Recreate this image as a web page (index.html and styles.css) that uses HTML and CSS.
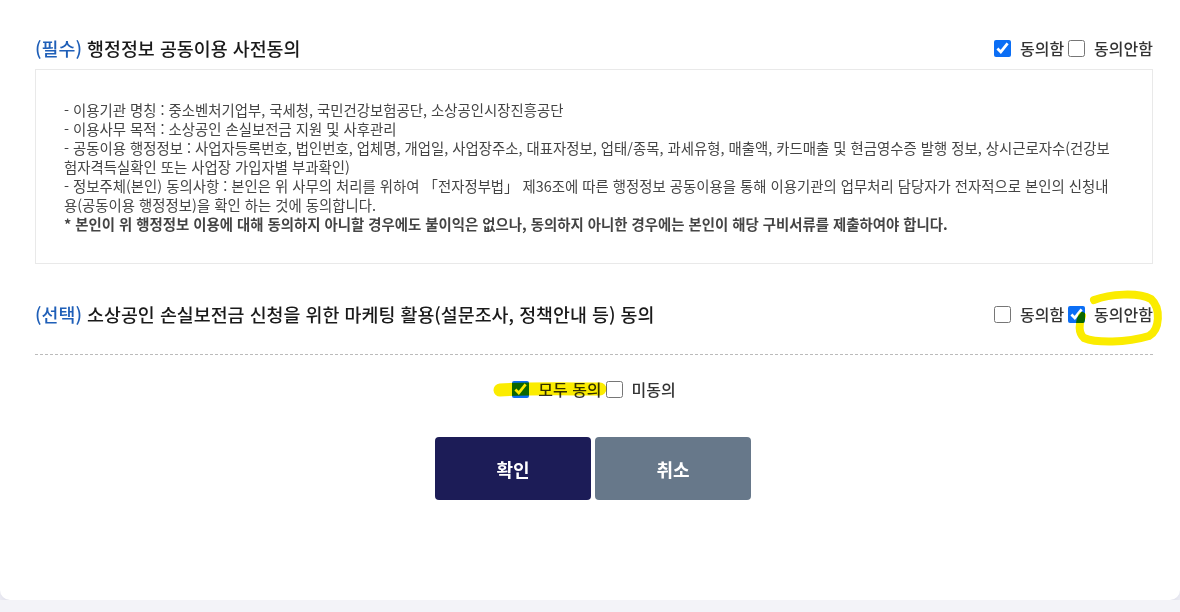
FILE: index.html
```html
<!DOCTYPE html>
<html lang="ko">
<head>
  <meta charset="UTF-8">
  <meta name="viewport" content="width=device-width, initial-scale=1.0">
  <title>행정정보 공동이용 동의</title>
  <link rel="stylesheet" href="styles.css">
</head>
<body>
  <div class="card">
    <div class="agree-head">
      <h3 class="agree-title"><span class="tag">(필수)</span> 행정정보 공동이용 사전동의</h3>
      <div class="choices">
        <label class="choice"><input type="checkbox" checked> 동의함</label>
        <label class="choice"><input type="checkbox"> 동의안함</label>
      </div>
    </div>

    <div class="terms">
      <p>- 이용기관 명칭 : 중소벤처기업부, 국세청, 국민건강보험공단, 소상공인시장진흥공단</p>
      <p>- 이용사무 목적 : 소상공인 손실보전금 지원 및 사후관리</p>
      <p>- 공동이용 행정정보 : 사업자등록번호, 법인번호, 업체명, 개업일, 사업장주소, 대표자정보, 업태/종목, 과세유형, 매출액, 카드매출 및 현금영수증 발행 정보, 상시근로자수(건강보<br>험자격득실확인 또는 사업장 가입자별 부과확인)</p>
      <p>- 정보주체(본인) 동의사항 : 본인은 위 사무의 처리를 위하여 「전자정부법」 제36조에 따른 행정정보 공동이용을 통해 이용기관의 업무처리 담당자가 전자적으로 본인의 신청내<br>용(공동이용 행정정보)을 확인 하는 것에 동의합니다.</p>
      <p class="strong">* 본인이 위 행정정보 이용에 대해 동의하지 아니할 경우에도 불이익은 없으나, 동의하지 아니한 경우에는 본인이 해당 구비서류를 제출하여야 합니다.</p>
    </div>

    <div class="agree-head second">
      <h3 class="agree-title"><span class="tag">(선택)</span> 소상공인 손실보전금 신청을 위한 마케팅 활용(설문조사, 정책안내 등) 동의</h3>
      <div class="choices">
        <label class="choice"><input type="checkbox"> 동의함</label>
        <label class="choice"><input type="checkbox" checked> 동의안함</label>
      </div>
    </div>

    <div class="all-agree">
      <label class="choice"><input type="checkbox" checked> 모두 동의</label>
      <label class="choice"><input type="checkbox"> 미동의</label>
    </div>

    <div class="buttons">
      <button class="btn btn-ok">확인</button>
      <button class="btn btn-cancel">취소</button>
    </div>

    <!-- 형광펜 표시 -->
    <svg class="marker" width="1180" height="600" viewBox="0 0 1180 600">
      <path d="M1094 300 C1110 294 1138 292 1151 299 C1161 308 1160 330 1149 336 C1126 343 1096 343 1084 338 C1078 333 1079 323 1082 316" />
      <path class="band" d="M500 390 C530 388 570 389 600 389" />
    </svg>
  </div>
</body>
</html>
```

FILE: styles.css
```css
body {
  margin: 0;
  background-color: #f3f3f8;
  font-family: "Noto Sans CJK KR", "Noto Sans", sans-serif;
  color: #222;
}
.card {
  position: relative;
  height: 600px;
  box-sizing: border-box;
  padding: 28px 27px 0 35px;
  background-color: #fff;
  border-radius: 0 0 10px 10px;
  box-shadow: 0 4px 10px rgba(60, 60, 120, 0.12);
}
.agree-head {
  display: flex;
  justify-content: space-between;
  align-items: center;
  height: 40px;
}
.agree-head.second {
  margin-top: 29px;
  height: 42px;
  padding-bottom: 19px;
  border-bottom: 1px dashed #bbb;
}
.agree-title {
  margin: 0;
  font-size: 18.4px;
  font-weight: 500;
  color: #1a1a1a;
}
.tag {
  color: #1f5fb8;
}
.choices {
  display: flex;
  align-items: center;
}
.choice {
  display: flex;
  align-items: center;
  font-size: 16px;
  font-weight: 500;
  color: #333;
  white-space: nowrap;
}
.choice input {
  width: 17px;
  height: 17px;
  margin: 0 9px 0 4px;
  accent-color: #0b6ef5;
}
.terms {
  margin-top: 1px;
  height: 195px;
  box-sizing: border-box;
  padding: 30px 20px 0 28px;
  border: 1px solid #e9e9e9;
  font-size: 14.4px;
  line-height: 19px;
  color: #444;
  white-space: nowrap;
}
.terms p {
  margin: 0;
}
.terms .strong {
  font-weight: 700;
}
.all-agree {
  display: flex;
  justify-content: center;
  margin-top: 22px;
  padding-right: 4px;
}
.buttons {
  display: flex;
  justify-content: center;
  gap: 4px;
  margin-top: 36px;
  padding-right: 2px;
}
.btn {
  width: 156px;
  height: 63px;
  border: none;
  border-radius: 4px;
  color: #fff;
  font-family: inherit;
  font-size: 18px;
  font-weight: 700;
}
.btn-ok {
  background-color: #1c1c57;
}
.btn-cancel {
  background-color: #67788a;
}
.marker {
  position: absolute;
  left: 0;
  top: 0;
  pointer-events: none;
  mix-blend-mode: multiply;
}
.marker path {
  fill: none;
  stroke: #fbec00;
  stroke-width: 8;
  stroke-linecap: round;
}
.marker .band {
  stroke-width: 13;
}
```
